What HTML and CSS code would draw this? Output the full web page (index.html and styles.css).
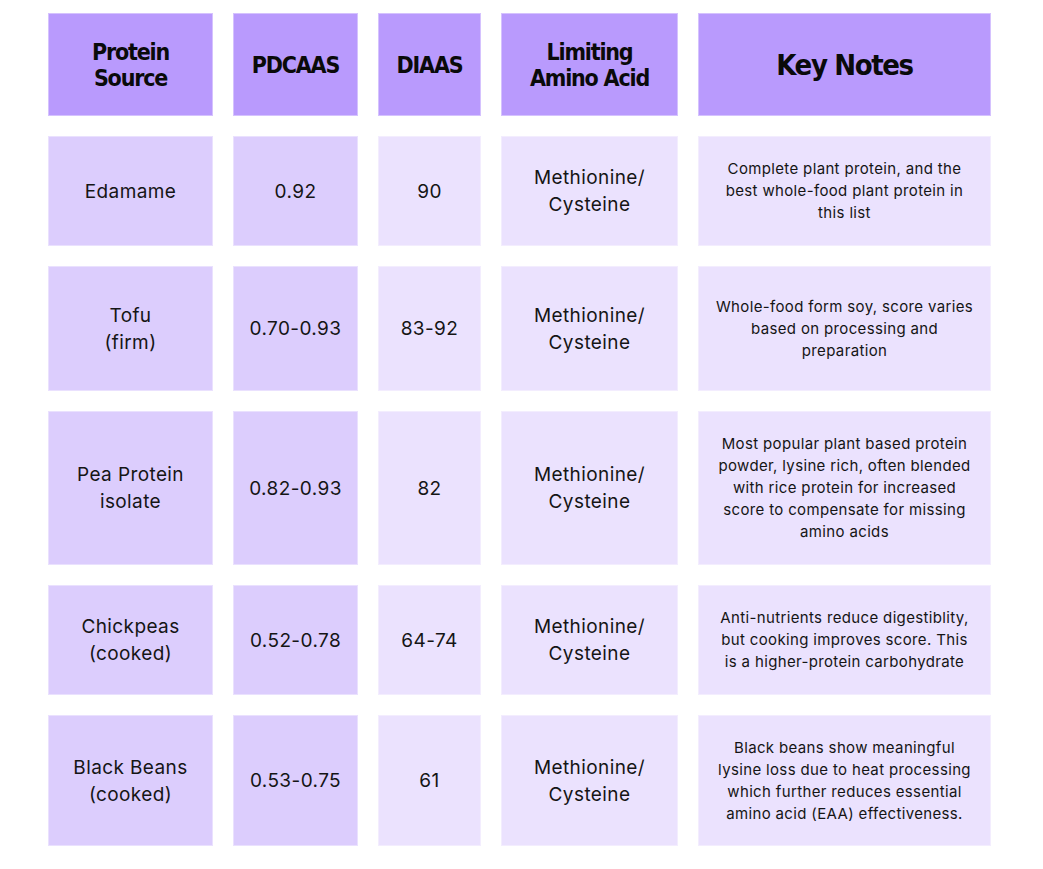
FILE: index.html
```html
<!DOCTYPE html>
<html lang="en">
<head>
<meta charset="utf-8">
<title>Plant Protein Comparison</title>
<link rel="stylesheet" href="styles.css">
</head>
<body>
<div class="table">
  <div class="cell head">Protein<br>Source</div>
  <div class="cell head">PDCAAS</div>
  <div class="cell head">DIAAS</div>
  <div class="cell head">Limiting<br>Amino Acid</div>
  <div class="cell head big">Key Notes</div>

  <div class="cell mid">Edamame</div>
  <div class="cell mid">0.92</div>
  <div class="cell light">90</div>
  <div class="cell light">Methionine/<br>Cysteine</div>
  <div class="cell light note">Complete plant protein, and the<br>best whole-food plant protein in<br>this list</div>

  <div class="cell mid">Tofu<br>(firm)</div>
  <div class="cell mid">0.70-0.93</div>
  <div class="cell light">83-92</div>
  <div class="cell light">Methionine/<br>Cysteine</div>
  <div class="cell light note">Whole-food form soy, score varies<br>based on processing and<br>preparation</div>

  <div class="cell mid">Pea Protein<br>isolate</div>
  <div class="cell mid">0.82-0.93</div>
  <div class="cell light">82</div>
  <div class="cell light">Methionine/<br>Cysteine</div>
  <div class="cell light note">Most popular plant based protein<br>powder, lysine rich, often blended<br>with rice protein for increased<br>score to compensate for missing<br>amino acids</div>

  <div class="cell mid">Chickpeas<br>(cooked)</div>
  <div class="cell mid">0.52-0.78</div>
  <div class="cell light">64-74</div>
  <div class="cell light">Methionine/<br>Cysteine</div>
  <div class="cell light note">Anti-nutrients reduce digestiblity,<br>but cooking improves score. This<br>is a higher-protein carbohydrate</div>

  <div class="cell mid">Black Beans<br>(cooked)</div>
  <div class="cell mid">0.53-0.75</div>
  <div class="cell light">61</div>
  <div class="cell light">Methionine/<br>Cysteine</div>
  <div class="cell light note">Black beans show meaningful<br>lysine loss due to heat processing<br>which further reduces essential<br>amino acid (EAA) effectiveness.</div>
</div>
</body>
</html>
```

FILE: styles.css
```css
html, body {
  margin: 0;
  padding: 0;
  background: #ffffff;
}

body {
  font-family: Inter, "Noto Sans", sans-serif;
  color: #151515;
}

.table {
  display: grid;
  grid-template-columns: 165px 125px 103px 177px 293px;
  grid-template-rows: 103px 110px 125px 154px 110px 131px;
  column-gap: 20px;
  row-gap: 20px;
  padding: 13px 0 0 48px;
}

.cell {
  display: flex;
  align-items: center;
  justify-content: center;
  text-align: center;
  box-sizing: border-box;
  border: 1px solid rgba(255, 255, 255, 0.4);
  font-size: 19px;
  line-height: 27px;
  font-weight: 400;
  letter-spacing: 0.4px;
}

.head {
  background: #b99afd;
  font-family: "DejaVu Sans", sans-serif;
  font-stretch: condensed;
  font-weight: 700;
  font-size: 23px;
  line-height: 26px;
  color: #0a0a0a;
  letter-spacing: -1.2px;
}

.head.big {
  font-size: 29px;
  line-height: 34px;
  letter-spacing: -1.4px;
}

.mid {
  background: #dccdfd;
}

.light {
  background: #ebe2fe;
}

.note {
  font-size: 15px;
  line-height: 22px;
  white-space: nowrap;
  letter-spacing: 0.35px;
}
```
